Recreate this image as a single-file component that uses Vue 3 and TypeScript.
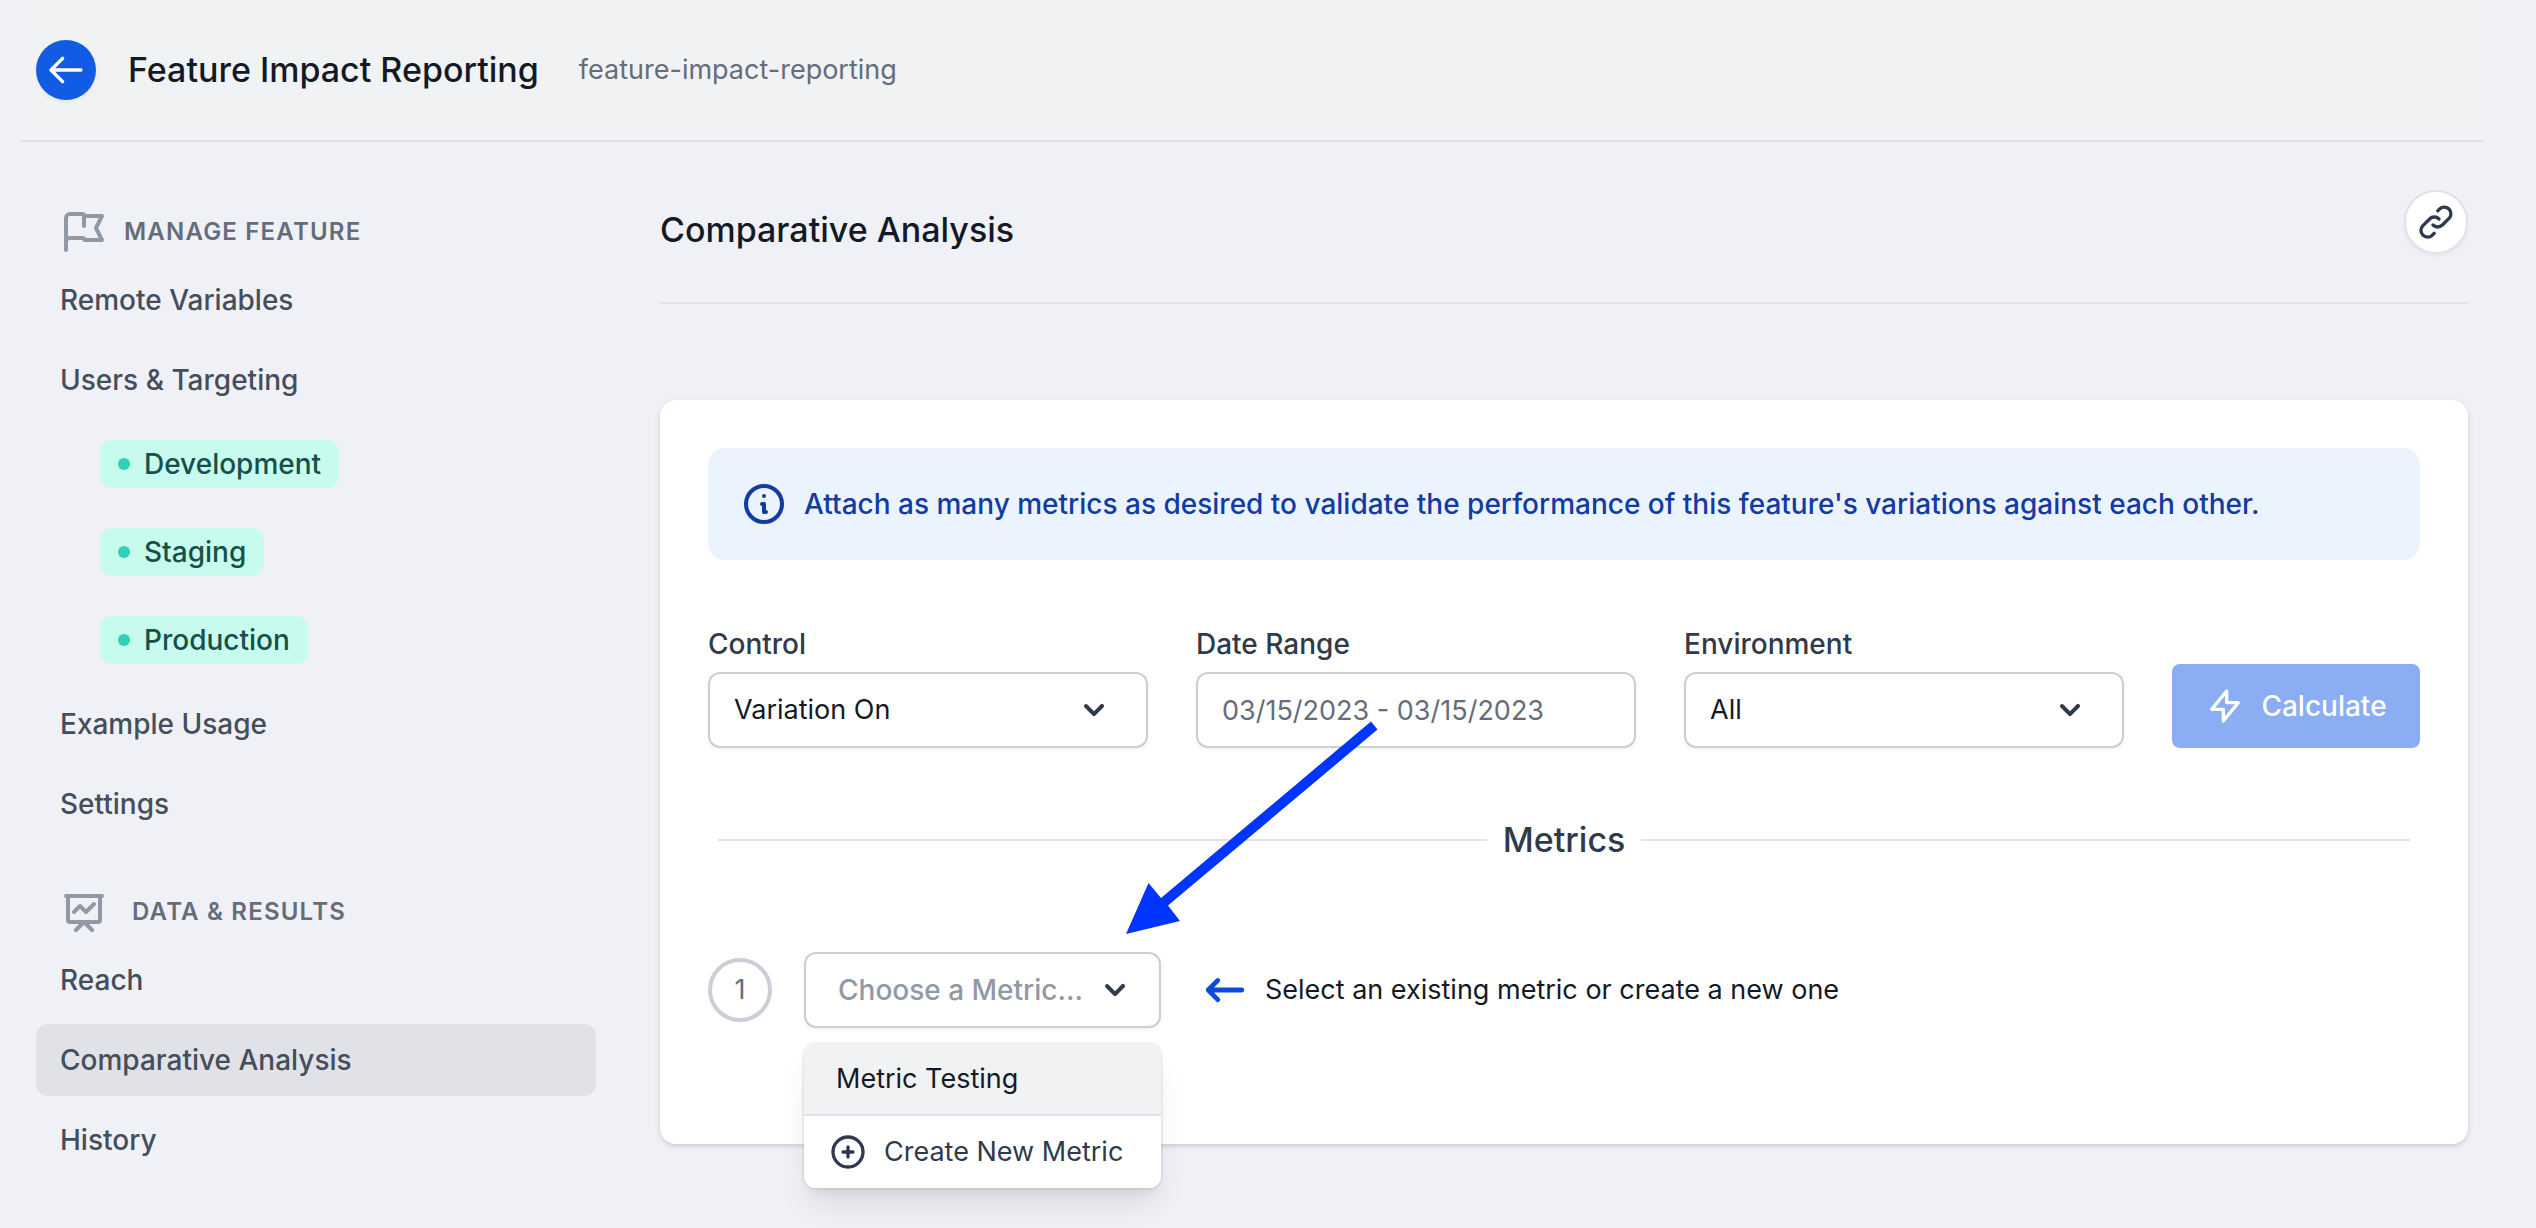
<script setup lang="ts">
import { ref } from 'vue'

interface NavItem {
  label: string
  active?: boolean
  environments?: string[]
}

const manageItems: NavItem[] = [
  { label: 'Remote Variables' },
  { label: 'Users & Targeting', environments: ['Development', 'Staging', 'Production'] },
  { label: 'Example Usage' },
  { label: 'Settings' },
]

const dataItems: NavItem[] = [
  { label: 'Reach' },
  { label: 'Comparative Analysis', active: true },
  { label: 'History' },
]

const control = ref('Variation On')
const dateRange = ref('03/15/2023 - 03/15/2023')
const environment = ref('All')
const menuOpen = ref(true)
const metrics = ['Metric Testing']

const chevron =
  'M5.293 7.293a1 1 0 011.414 0L10 10.586l3.293-3.293a1 1 0 111.414 1.414l-4 4a1 1 0 01-1.414 0l-4-4a1 1 0 010-1.414z'
</script>

<template>
  <div class="page">
    <header class="topbar">
      <button class="back" type="button" aria-label="Back">
        <svg class="icon-md line" viewBox="0 0 24 24"><path d="M10 19l-7-7 7-7m-7 7h18" /></svg>
      </button>
      <h1>Feature Impact Reporting</h1>
      <span class="slug">feature-impact-reporting</span>
    </header>

    <div class="body">
      <nav class="sidebar" aria-label="Feature">
        <section>
          <h2 class="nav-head">
            <svg class="icon-lg line" viewBox="0 0 24 24">
              <path d="M3 21v-4m0 0V5a2 2 0 012-2h6.5l1 1H21l-3 6 3 6h-8.5l-1-1H5a2 2 0 00-2 2zm9-13.5V9" />
            </svg>
            Manage Feature
          </h2>
          <ul class="nav-list">
            <li v-for="item in manageItems" :key="item.label">
              <a class="nav-link" href="#">{{ item.label }}</a>
              <ul v-if="item.environments" class="env-list">
                <li v-for="env in item.environments" :key="env">
                  <a class="env" href="#"><span class="dot"></span>{{ env }}</a>
                </li>
              </ul>
            </li>
          </ul>
        </section>

        <section>
          <h2 class="nav-head wide">
            <svg class="icon-lg line" viewBox="0 0 24 24">
              <path d="M7 12l3-3 3 3 4-4M8 21l4-4 4 4M3 4h18M4 4h16v12a1 1 0 01-1 1H5a1 1 0 01-1-1V4z" />
            </svg>
            Data &amp; Results
          </h2>
          <ul class="nav-list">
            <li v-for="item in dataItems" :key="item.label">
              <a class="nav-link" :class="{ active: item.active }" href="#">{{ item.label }}</a>
            </li>
          </ul>
        </section>
      </nav>

      <main class="main">
        <div class="section-head">
          <h2>Comparative Analysis</h2>
          <button class="link-button" type="button" aria-label="Copy link">
            <svg class="icon-md line" viewBox="0 0 24 24">
              <path
                d="M13.828 10.172a4 4 0 00-5.656 0l-4 4a4 4 0 105.656 5.656l1.102-1.101m-.758-4.899a4 4 0 005.656 0l4-4a4 4 0 00-5.656-5.656l-1.1 1.1"
              />
            </svg>
          </button>
        </div>

        <div class="card">
          <p class="notice">
            <svg class="icon-lg line" viewBox="0 0 24 24">
              <path d="M13 16h-1v-4h-1m1-4h.01M21 12a9 9 0 11-18 0 9 9 0 0118 0z" />
            </svg>
            <span>Attach as many metrics as desired to validate the performance of this feature's variations against each other.</span>
          </p>

          <form class="filters" @submit.prevent>
            <div class="field">
              <label for="control">Control</label>
              <div class="box">
                <select id="control" v-model="control">
                  <option>Variation On</option>
                </select>
                <svg class="icon-md solid chevron" viewBox="0 0 20 20"><path :d="chevron" /></svg>
              </div>
            </div>
            <div class="field">
              <label for="dates">Date Range</label>
              <div class="box">
                <input id="dates" v-model="dateRange" type="text" />
              </div>
            </div>
            <div class="field">
              <label for="environment">Environment</label>
              <div class="box">
                <select id="environment" v-model="environment">
                  <option>All</option>
                </select>
                <svg class="icon-md solid chevron" viewBox="0 0 20 20"><path :d="chevron" /></svg>
              </div>
            </div>
            <button class="calculate" type="submit">
              <svg class="icon-md line" viewBox="0 0 24 24"><path d="M13 10V3L4 14h7v7l9-11h-7z" /></svg>
              Calculate
            </button>
          </form>

          <h3 class="divider">Metrics</h3>

          <div class="metric-row">
            <span class="step">1</span>
            <div class="picker">
              <button
                class="picker-button"
                type="button"
                aria-haspopup="listbox"
                :aria-expanded="menuOpen"
                @click="menuOpen = !menuOpen"
              >
                Choose a Metric...
                <svg class="icon-md solid" viewBox="0 0 20 20"><path :d="chevron" /></svg>
              </button>
              <ul v-if="menuOpen" class="menu">
                <li v-for="metric in metrics" :key="metric">
                  <button class="menu-item highlighted" type="button">{{ metric }}</button>
                </li>
                <li>
                  <button class="menu-item create" type="button">
                    <svg class="icon-md line" viewBox="0 0 24 24">
                      <path d="M12 9v3m0 0v3m0-3h3m-3 0H9m12 0a9 9 0 11-18 0 9 9 0 0118 0z" />
                    </svg>
                    Create New Metric
                  </button>
                </li>
              </ul>
              <svg class="pointer" viewBox="0 0 252 213" aria-hidden="true">
                <path d="M245 0.5L251.5 8.5L42 184.5L54 200L0 213L22.5 162L35 177Z" />
              </svg>
            </div>
            <p class="hint">
              <svg class="icon-lg solid" viewBox="0 0 20 20">
                <path
                  d="M7.707 14.707a1 1 0 01-1.414 0l-4-4a1 1 0 010-1.414l4-4a1 1 0 011.414 1.414L5.414 9H17a1 1 0 110 2H5.414l2.293 2.293a1 1 0 010 1.414z"
                />
              </svg>
              Select an existing metric or create a new one
            </p>
          </div>
        </div>
      </main>
    </div>
  </div>
</template>

<style>
body {
  background: #f0f1f6;
}
</style>

<style scoped>
.page {
  box-sizing: border-box;
  min-height: 100vh;
  padding: 0 52px 40px 20px;
  font-family: Inter, 'Liberation Sans', sans-serif;
  font-size: 27px;
  line-height: 40px;
  color: #131a26;
}
.page *,
.page *::before,
.page *::after {
  box-sizing: border-box;
}
h1,
h2,
h3,
p,
ul {
  margin: 0;
  padding: 0;
}
ul {
  list-style: none;
}
a {
  text-decoration: none;
}
button,
select,
input {
  margin: 0;
  border: 0;
  font: inherit;
  color: inherit;
}
button {
  cursor: pointer;
}
.icon-md,
.icon-lg {
  display: block;
  flex: none;
  width: 40px;
  height: 40px;
}
.icon-lg {
  width: 48px;
  height: 48px;
}
.line {
  fill: none;
  stroke: currentColor;
  stroke-width: 2;
  stroke-linecap: round;
  stroke-linejoin: round;
}
.solid {
  fill: currentColor;
}

.topbar {
  display: flex;
  align-items: center;
  height: 142px;
  padding: 0 16px;
  background: #f1f2f4;
  border-bottom: 2px solid #e1e2e7;
}
.back {
  display: flex;
  align-items: center;
  justify-content: center;
  width: 60px;
  height: 60px;
  padding: 0;
  border-radius: 50%;
  background: #125ce3;
  color: #fff;
  box-shadow: 0 2px 4px rgba(0, 0, 0, 0.05);
}
h1 {
  margin: 0 40px 0 32px;
  font-size: 34px;
  font-weight: 500;
}
.slug {
  color: #656d7a;
}

.body {
  display: grid;
  grid-template-columns: 560px minmax(0, 1fr);
  gap: 64px;
  padding: 0 16px;
}
.sidebar {
  display: flex;
  flex-direction: column;
  gap: 48px;
  padding-top: 66px;
}
.nav-head {
  display: flex;
  align-items: center;
  gap: 16px;
  margin-bottom: 8px;
  padding: 0 24px;
  font-size: 24px;
  font-weight: 600;
  letter-spacing: 0.05em;
  text-transform: uppercase;
  color: #656d7a;
}
.nav-head.wide {
  gap: 24px;
}
.nav-head svg {
  color: #9199a6;
}
.nav-list {
  display: flex;
  flex-direction: column;
  gap: 8px;
}
.nav-link {
  display: block;
  padding: 16px 24px;
  border-radius: 12px;
  font-size: 28px;
  font-weight: 500;
  color: #444e5c;
}
.nav-link.active {
  background: #e1e2e7;
}
.env-list {
  display: flex;
  flex-direction: column;
  gap: 40px;
  padding: 24px 64px 16px;
}
.env-list li {
  display: flex;
}
.env {
  display: flex;
  align-items: center;
  gap: 14px;
  padding: 4px 18px;
  border-radius: 12px;
  background: #c7fbee;
  font-size: 28px;
  font-weight: 500;
  color: #145149;
}
.dot {
  width: 12px;
  height: 12px;
  border-radius: 50%;
  background: #31cfba;
}

.section-head {
  display: flex;
  align-items: flex-end;
  justify-content: space-between;
  padding: 48px 0;
  border-bottom: 2px solid #e1e2e7;
}
.section-head h2 {
  font-size: 34px;
  font-weight: 500;
  line-height: 48px;
}
.link-button {
  display: flex;
  align-items: center;
  justify-content: center;
  width: 64px;
  height: 64px;
  padding: 0;
  border: 2px solid #e1e2e7;
  border-radius: 50%;
  background: #fff;
  color: #2f3a4a;
  box-shadow: 0 2px 4px rgba(0, 0, 0, 0.05);
}
.card {
  margin-top: 96px;
  padding: 48px 48px 116px;
  border-radius: 16px;
  background: #fff;
  box-shadow: 0 2px 6px rgba(0, 0, 0, 0.1), 0 2px 4px rgba(0, 0, 0, 0.06);
}
.notice {
  display: flex;
  align-items: center;
  gap: 16px;
  padding: 32px;
  border-radius: 16px;
  background: #ebf4fe;
  font-size: 28px;
  font-weight: 500;
  color: #123ba3;
}
.filters {
  display: grid;
  grid-template-columns: repeat(3, minmax(0, 1fr)) auto;
  align-items: end;
  gap: 48px;
  margin-top: 64px;
}
.field {
  display: flex;
  flex-direction: column;
  gap: 8px;
}
.field label {
  font-size: 28px;
  font-weight: 500;
  color: #2f3a4a;
}
.box {
  position: relative;
}
.box select,
.box input {
  display: block;
  width: 100%;
  height: 76px;
  padding: 0 24px;
  border: 2px solid #cbced6;
  border-radius: 12px;
  background: #fff;
  appearance: none;
  box-shadow: 0 2px 4px rgba(0, 0, 0, 0.05);
}
.box input {
  color: #656d7a;
}
.chevron {
  position: absolute;
  top: 18px;
  right: 34px;
  color: #2f3a4a;
  pointer-events: none;
}
.calculate {
  display: flex;
  align-items: center;
  justify-content: center;
  gap: 16px;
  min-width: 248px;
  height: 84px;
  padding: 0 32px;
  border-radius: 8px;
  background: #8aadf3;
  font-size: 28px;
  font-weight: 500;
  color: #fff;
}
.divider {
  display: flex;
  align-items: center;
  gap: 16px;
  margin: 60px 10px 80px;
  font-size: 34px;
  font-weight: 500;
  line-height: 64px;
  color: #2f3a4a;
}
.divider::before,
.divider::after {
  content: '';
  flex: 1;
  height: 2px;
  background: #e1e2e7;
}
.metric-row {
  display: flex;
  align-items: center;
}
.step {
  display: flex;
  align-items: center;
  justify-content: center;
  width: 64px;
  height: 64px;
  border: 4px solid #cbced6;
  border-radius: 50%;
  color: #656d7a;
}
.picker {
  position: relative;
  margin: 0 40px 0 32px;
}
.picker-button {
  display: flex;
  align-items: center;
  justify-content: space-between;
  gap: 12px;
  min-width: 356px;
  height: 76px;
  padding: 0 24px 0 32px;
  border: 2px solid #cbced6;
  border-radius: 12px;
  background: #fff;
  font-size: 28px;
  font-weight: 500;
  color: #9199a6;
  box-shadow: 0 2px 4px rgba(0, 0, 0, 0.05);
}
.picker-button svg {
  color: #2f3a4a;
}
.menu {
  position: absolute;
  top: 92px;
  left: 0;
  width: 100%;
  border-radius: 12px;
  overflow: hidden;
  background: #fff;
  box-shadow: 0 0 0 2px rgba(0, 0, 0, 0.05), 0 20px 30px -6px rgba(0, 0, 0, 0.1),
    0 8px 12px -4px rgba(0, 0, 0, 0.06);
}
.menu-item {
  display: flex;
  align-items: center;
  gap: 16px;
  width: 100%;
  height: 72px;
  padding: 0 32px;
  background: #fff;
  white-space: nowrap;
}
.menu-item.highlighted {
  background: #f1f2f4;
  border-bottom: 2px solid #e1e2e7;
}
.menu-item.create {
  padding: 0 24px;
  color: #2f3a4a;
}
.pointer {
  position: absolute;
  bottom: 94px;
  left: 322px;
  width: 252px;
  height: 213px;
  fill: #0035ff;
  pointer-events: none;
}
.hint {
  display: flex;
  align-items: center;
  gap: 16px;
}
.hint svg {
  color: #0a4bdb;
}
</style>
